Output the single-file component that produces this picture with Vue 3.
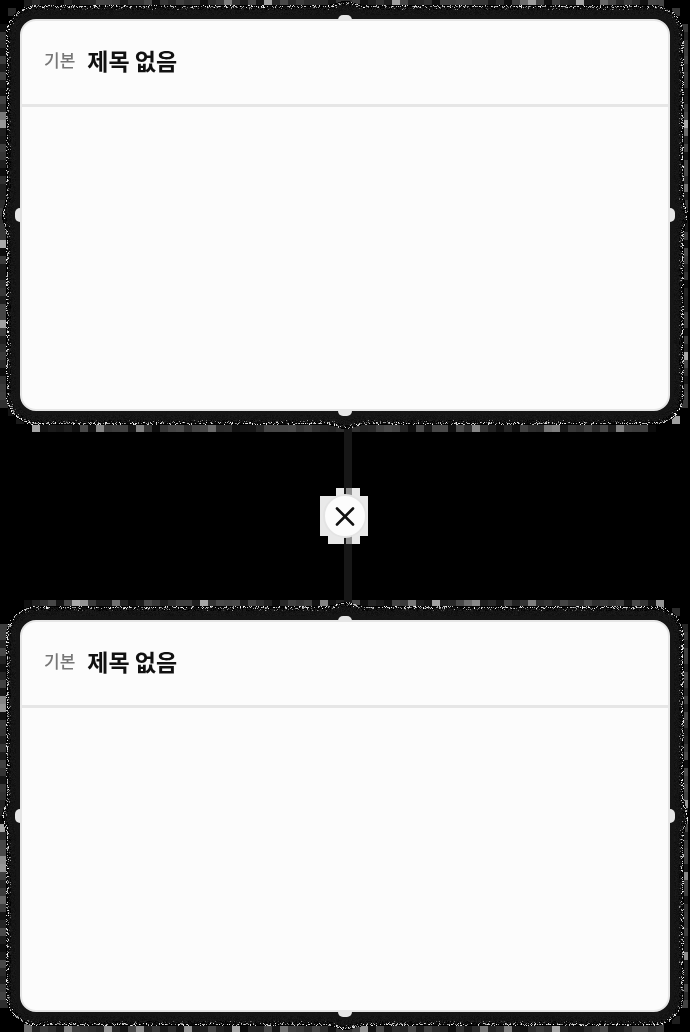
<script setup>
import { onBeforeUnmount, onMounted, ref } from 'vue'

const cards = [
  { id: 1, kind: '기본', title: '제목 없음' },
  { id: 2, kind: '기본', title: '제목 없음' },
]
const sides = ['top', 'right', 'bottom', 'left']

const board = ref(null)
const canvas = ref(null)
const CELL = 8
let observer

function randomSource(seed) {
  let s = seed
  return () => {
    s = (s * 1664525 + 1013904223) >>> 0
    return s / 4294967296
  }
}

// Distance from a point to the outline of a rounded box, positive outside it.
function distance(x, y, box, radius) {
  const qx = Math.abs(x - box.cx) - box.w / 2 + radius
  const qy = Math.abs(y - box.cy) - box.h / 2 + radius
  return Math.hypot(Math.max(qx, 0), Math.max(qy, 0)) + Math.min(Math.max(qx, qy), 0) - radius
}

// The halo swells a little around each handle.
function swell(x, y, box) {
  const dx = (x - box.cx) / 11
  const dy = (y - box.cy) / 11
  return 4 * Math.exp(-dx * dx) + 4 * Math.exp(-dy * dy)
}

function paint() {
  const el = canvas.value
  const origin = board.value.getBoundingClientRect()
  const width = Math.round(origin.width)
  const height = Math.round(origin.height)
  el.width = width
  el.height = height
  const ctx = el.getContext('2d')
  const random = randomSource(77)
  const boxes = [...board.value.querySelectorAll('.card')].map((node) => {
    const r = node.getBoundingClientRect()
    return {
      cx: r.left - origin.left + r.width / 2,
      cy: r.top - origin.top + r.height / 2,
      w: r.width,
      h: r.height,
    }
  })

  for (let y = 0; y < height; y += CELL) {
    for (let x = 0; x < width; x += CELL) {
      for (const box of boxes) {
        const d = distance(x + 4, y + 4, box, 16)
        if (d < 13 || d > 17.5) continue
        const roll = random()
        const shade = roll > 0.9 ? 100 + random() * 70 : 12 + random() * 62
        ctx.fillStyle = `rgb(${shade},${shade},${shade})`
        ctx.fillRect(x, y, CELL, CELL)
      }
    }
  }

  const col = Math.floor(boxes[0].cx / CELL) * CELL
  const lineTop = boxes[0].cy + boxes[0].h / 2 + 13
  const lineEnd = boxes[1].cy - boxes[1].h / 2 - 15
  ctx.fillStyle = '#171717'
  ctx.fillRect(col, lineTop, CELL, lineEnd - lineTop)

  const row = Math.floor((lineTop + lineEnd) / 2 / CELL) * CELL
  ctx.fillStyle = '#e9e9e9'
  ctx.fillRect(col - 24, row - 16, 48, 40)
  ctx.fillRect(col - 8, row - 24, 24, CELL)
  ctx.fillRect(col - 16, row + 24, 32, CELL)
  for (const y of [row - 24, row + 24]) {
    ctx.fillStyle = '#171717'
    ctx.fillRect(col, y, 2, CELL)
    ctx.fillStyle = '#909090'
    ctx.fillRect(col + 2, y, 6, CELL)
  }

  const image = ctx.getImageData(0, 0, width, height)
  for (const box of boxes) {
    const x0 = Math.max(0, Math.floor(box.cx - box.w / 2 - 20))
    const x1 = Math.min(width, Math.ceil(box.cx + box.w / 2 + 20))
    const y0 = Math.max(0, Math.floor(box.cy - box.h / 2 - 20))
    const y1 = Math.min(height, Math.ceil(box.cy + box.h / 2 + 20))
    for (let y = y0; y < y1; y++) {
      for (let x = x0; x < x1; x++) {
        const d = distance(x + 0.5, y + 0.5, box, 16) - swell(x, y, box)
        if (d < -4 || d > 14) continue
        let shade
        if (d < 4) shade = 20 + random() * 3
        else if (d < 9) shade = 14 + random() * 13
        else if (d < 11) shade = random() < 0.06 ? 60 + random() * 100 : random() * 34
        else if (d < 12) shade = random() < 0.2 ? 100 + random() * 155 : random() * 20
        else if (d < 13.2) shade = random() < 0.42 ? 120 + random() * 135 : random() * 20
        else shade = random() < 0.15 ? 170 + random() * 85 : 0
        const i = (y * width + x) * 4
        image.data[i] = shade
        image.data[i + 1] = shade
        image.data[i + 2] = shade
        image.data[i + 3] = 255
      }
    }
  }
  ctx.putImageData(image, 0, 0)
}

onMounted(() => {
  paint()
  observer = new ResizeObserver(paint)
  observer.observe(board.value)
})
onBeforeUnmount(() => observer?.disconnect())
</script>

<template>
  <main ref="board" class="board">
    <canvas ref="canvas" class="halo" aria-hidden="true"></canvas>
    <template v-for="(card, index) in cards" :key="card.id">
      <div v-if="index > 0" class="connector">
        <button class="remove" type="button" aria-label="연결 삭제">
          <svg viewBox="0 0 20 20" width="20" height="20" aria-hidden="true">
            <path d="M2 2.5 18 18.5M18 2.5 2 18.5" />
          </svg>
        </button>
      </div>
      <article class="card">
        <i v-for="side in sides" :key="side" class="handle" :class="side"></i>
        <div class="surface">
          <header class="head">
            <span class="kind">{{ card.kind }}</span>
            <h2 class="title">{{ card.title }}</h2>
          </header>
          <div class="body"></div>
        </div>
      </article>
    </template>
  </main>
</template>

<style>
body {
  background: #000;
}
</style>

<style scoped>
.board {
  position: relative;
  display: flex;
  flex-direction: column;
  padding: 19px 20px 20px;
  background: #000;
  font-family: "Noto Sans CJK KR", "Noto Sans", sans-serif;
}
.halo {
  position: absolute;
  inset: 0;
  width: 100%;
  height: 100%;
}
.card {
  position: relative;
}
.surface {
  position: relative;
  overflow: hidden;
  border: 2px solid #e6e6e6;
  border-radius: 16px;
  background: #fcfcfc;
}
.head {
  display: flex;
  align-items: center;
  gap: 12px;
  min-height: 78px;
  padding: 0 22px 5px;
  border-bottom: 3px solid #e6e6e6;
}
.kind {
  color: #777;
  font-size: 17px;
  font-weight: 500;
  line-height: 24px;
}
.title {
  margin: 0;
  color: #111;
  font-size: 23px;
  font-weight: 700;
  line-height: 32px;
}
.body {
  min-height: 302px;
}
.handle {
  position: absolute;
  width: 14px;
  height: 14px;
  border-radius: 5px;
  background: #e6e6e6;
}
.top {
  top: -4px;
  left: calc(50% - 7px);
}
.bottom {
  bottom: -5px;
  left: calc(50% - 7px);
}
.left {
  left: -5px;
  top: calc(50% - 7px);
}
.right {
  right: -5px;
  top: calc(50% - 7px);
}
.connector {
  position: relative;
  display: flex;
  align-items: center;
  justify-content: center;
  height: 209px;
}
.remove {
  display: flex;
  align-items: center;
  justify-content: center;
  width: 44px;
  height: 44px;
  padding: 0;
  border: 2px solid #e4e4e4;
  border-radius: 50%;
  background: #fcfcfc;
  cursor: pointer;
}
.remove svg {
  fill: none;
  stroke: #111;
  stroke-width: 2.6;
  stroke-linecap: round;
}
</style>
